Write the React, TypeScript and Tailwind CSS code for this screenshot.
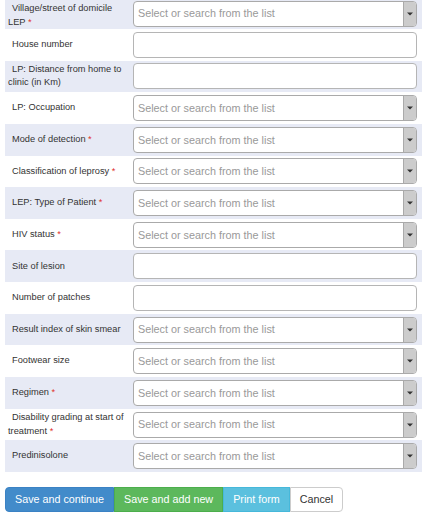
type Field = {
  label: string;
  required?: boolean;
  kind: "select" | "input";
};

const FIELDS: Field[] = [
  { label: "Village/street of domicile LEP", required: true, kind: "select" },
  { label: "House number", kind: "input" },
  { label: "LP: Distance from home to clinic (in Km)", kind: "input" },
  { label: "LP: Occupation", kind: "select" },
  { label: "Mode of detection", required: true, kind: "select" },
  { label: "Classification of leprosy", required: true, kind: "select" },
  { label: "LEP: Type of Patient", required: true, kind: "select" },
  { label: "HIV status", required: true, kind: "select" },
  { label: "Site of lesion", kind: "input" },
  { label: "Number of patches", kind: "input" },
  { label: "Result index of skin smear", kind: "select" },
  { label: "Footwear size", kind: "select" },
  { label: "Regimen", required: true, kind: "select" },
  { label: "Disability grading at start of treatment", required: true, kind: "select" },
  { label: "Predinisolone", kind: "select" }
];

function SelectBox() {
  return (
    <div className="flex h-[26px] w-full overflow-hidden rounded-[4px] border border-[#aaaaaa] bg-white">
      <span className="flex flex-1 items-center pl-[4px] text-[10.8px] text-[#999999]">
        Select or search from the list
      </span>
      <span className="flex w-[13px] items-center justify-center border-l border-[#aaaaaa] bg-[#cccccc]">
        <svg width="6" height="4" viewBox="0 0 6 4">
          <path d="M0 0.5h6L3 3.5z" fill="#333" />
        </svg>
      </span>
    </div>
  );
}

function TextBox() {
  return <div className="h-[26px] w-full rounded-[4px] border border-[#b5b5b5] bg-white" />;
}

export default function App() {
  return (
    <div className="min-h-[520px] bg-white px-[5px] font-['Liberation_Sans',Arial,sans-serif] text-[#333333]">
      <div className="flex flex-col">
        {FIELDS.map((f, i) => (
          <div
            key={f.label}
            className={`flex items-center pr-[5px] ${i === 0 ? "h-[29px]" : "h-[31.65px]"} ${
              i % 2 === 0 ? "bg-[#e7eaf5]" : "bg-white"
            }`}
          >
            <div
              className={`w-[128px] shrink-0 pl-[3px] pr-[5px] indent-[4px] text-[9.25px] leading-[13.5px] ${
                i === 0 ? "pt-[2px]" : ""
              }`}
            >
              {f.label}
              {f.required && <span className="text-[#e0302a]"> *</span>}
            </div>
            <div className={`flex-1 ${i === 0 ? "-mt-[2px]" : ""}`}>
              {f.kind === "select" ? <SelectBox /> : <TextBox />}
            </div>
          </div>
        ))}
      </div>
      <div className="mt-[15px] flex text-[10.75px]">
        <button className="h-[25px] rounded-l-[4px] border border-[#3b82c4] bg-[#428bca] px-[9px] text-white">
          Save and continue
        </button>
        <button className="h-[25px] border border-[#4cae4c] bg-[#5cb85c] px-[9px] text-white">
          Save and add new
        </button>
        <button className="h-[25px] border border-[#46b8da] bg-[#5bc0de] px-[9px] text-white">
          Print form
        </button>
        <button className="h-[25px] rounded-r-[4px] border border-[#cccccc] bg-white px-[9px] text-[#333333]">
          Cancel
        </button>
      </div>
    </div>
  );
}
